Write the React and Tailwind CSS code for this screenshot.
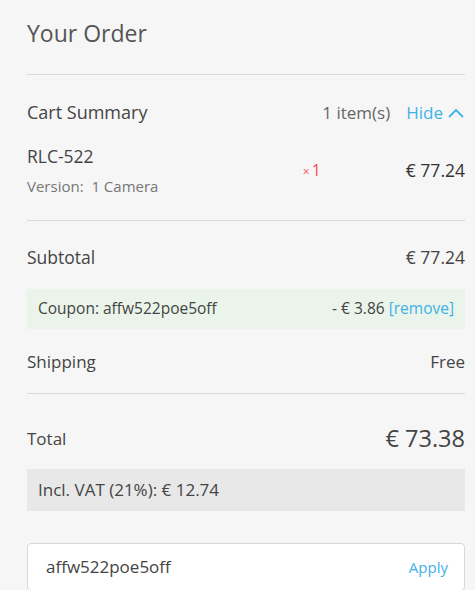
import React from "react";

export default function App() {
  return (
    <div
      className="w-[475px] h-[590px] overflow-hidden bg-[#f6f6f6] text-[#444]"
      style={{ fontFamily: "'Open Sans', 'Noto Sans', sans-serif" }}
    >
      <div className="pl-[27px] pr-[10px]">
        <div className="pt-[17px] pb-[25px] text-[23px] leading-[32px] text-[#555] font-normal">
          Your Order
        </div>
        <div className="h-px bg-[#dadada]" />

        <div className="flex items-center justify-between pt-[25px] h-[50px] text-[17px]">
          <span className="text-[18px]">Cart Summary</span>
          <div className="flex items-center">
            <span className="text-[#666] mr-[16px]">1 item(s)</span>
            <span className="text-[#3fb2e6]">Hide</span>
            <svg className="ml-[4px]" width="18" height="12" viewBox="0 0 18 12" fill="none">
              <path d="M2 10 L9 3 L16 10" stroke="#3fb2e6" strokeWidth="1.8" />
            </svg>
          </div>
        </div>

        <div className="flex items-center pt-[19px] pb-[24px]">
          <div className="flex-1">
            <div className="text-[17.5px] leading-[24px]">RLC-522</div>
            <div className="text-[15px] leading-[20px] mt-[8px] text-[#777]">Version:&nbsp; 1 Camera</div>
          </div>
          <div className="w-[103px] text-[#f0505a] text-[16px]">
            <span className="text-[12px] mr-[2px]">×</span>1
          </div>
          <div className="text-[17.5px] text-[#333]">€ 77.24</div>
        </div>
        <div className="h-px bg-[#dadada]" />

        <div className="flex justify-between items-center h-[73px] text-[17.5px]">
          <span>Subtotal</span>
          <span>€ 77.24</span>
        </div>
        <div className="flex justify-between items-center h-[40px] bg-[#eaf4ea] pl-[11px] pr-[11px] text-[15.5px] -mt-[5px]">
          <span>Coupon: affw522poe5off</span>
          <span>
            - € 3.86 <span className="text-[#3fb2e6]">[remove]</span>
          </span>
        </div>
        <div className="flex justify-between items-center h-[64px] pt-[1px] text-[17px]">
          <span>Shipping</span>
          <span>Free</span>
        </div>
        <div className="h-px bg-[#dadada]" />

        <div className="flex justify-between items-center h-[86px] pt-[4px] text-[17px]">
          <span>Total</span>
          <span className="text-[23.5px]">€ 73.38</span>
        </div>
        <div className="flex items-center h-[42px] bg-[#e8e8e8] pl-[11px] text-[17px] -mt-[11px]">
          Incl. VAT (21%): € 12.74
        </div>

        <div className="mt-[32px] flex items-center justify-between h-[48px] bg-white border border-[#d8d8d8] rounded-[4px] pl-[18px] pr-[16px]">
          <span className="text-[17px] text-[#444]">affw522poe5off</span>
          <span className="text-[15px] text-[#3fb2e6]">Apply</span>
        </div>
      </div>
    </div>
  );
}
